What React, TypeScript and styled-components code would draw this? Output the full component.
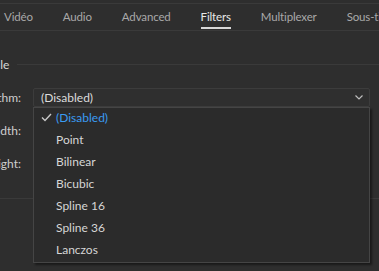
import styled, { createGlobalStyle } from 'styled-components';

const GlobalStyle = createGlobalStyle`
  html, body {
    margin: 0;
    padding: 0;
    background: #2e2e2e;
    overflow: hidden;
  }
  * {
    box-sizing: border-box;
  }
`;

const Page = styled.div`
  width: 379px;
  height: 271px;
  overflow: hidden;
  background: #2e2e2e;
  padding-top: 3px;
  font-family: 'Lato', 'Noto Sans', sans-serif;
  font-size: 12px;
  color: #d6d6d6;
`;

const TabBar = styled.div`
  display: flex;
  height: 28px;
  border-top: 1px solid #3a3a3a;
  border-bottom: 1px solid #3a3a3a;
  margin-left: -11px;
  white-space: nowrap;
  font-size: 11.5px;
  letter-spacing: -0.15px;
`;

const Tab = styled.div<{ $active?: boolean }>`
  position: relative;
  display: flex;
  align-items: center;
  padding: 0 15px 2px;
  color: ${(p) => (p.$active ? '#e8e8e8' : '#a9a9a9')};

  &::after {
    content: '';
    display: ${(p) => (p.$active ? 'block' : 'none')};
    position: absolute;
    left: 15px;
    right: 15px;
    bottom: 1px;
    height: 2px;
    background: #d8d8d8;
  }
`;

const Section = styled.div`
  padding-top: 25px;
`;

const SectionHeader = styled.div`
  display: flex;
  align-items: center;
  gap: 8px;
  margin-left: -18px;
  height: 16px;
  color: #d6d6d6;

  &::after {
    content: '';
    flex: 1;
    height: 1px;
    background: #3a3a3a;
  }
`;

const Form = styled.div`
  display: grid;
  grid-template-columns: 80px 337px;
  grid-auto-rows: 20px;
  column-gap: 12px;
  row-gap: 13px;
  margin-left: -59px;
  margin-top: 15px;
  align-items: center;
`;

const Label = styled.div`
  text-align: right;
  white-space: nowrap;
  color: #cfcfcf;
`;

const ComboWrap = styled.div`
  position: relative;
  height: 19px;
`;

const Combo = styled.div`
  display: flex;
  align-items: center;
  justify-content: space-between;
  height: 19px;
  padding: 0 6px 0 7px;
  border: 1px solid #3c3c3c;
  border-radius: 2px;
  background: #2f2f2f;
  color: #dcdcdc;
`;

const Menu = styled.div`
  position: absolute;
  top: 19px;
  left: 0;
  right: 0;
  z-index: 2;
  border: 1px solid #454545;
  background: #2b2b2b;
  box-shadow: 2px 2px 2px rgba(0, 0, 0, 0.45);
`;

const MenuItem = styled.div<{ $selected?: boolean }>`
  display: flex;
  align-items: center;
  height: 22px;
  padding-bottom: 2px;
  color: ${(p) => (p.$selected ? '#3a9bf2' : '#d6d6d6')};
`;

const CheckSlot = styled.div`
  width: 22px;
  display: flex;
  justify-content: center;
  padding-left: 3px;
`;

const Field = styled.div`
  height: 20px;
  border: 1px solid #3c3c3c;
  background: #2b2b2b;
`;

const Divider = styled.div`
  height: 1px;
  background: #3a3a3a;
  margin-top: 25px;
`;

const items = ['(Disabled)', 'Point', 'Bilinear', 'Bicubic', 'Spline 16', 'Spline 36', 'Lanczos'];

const Chevron = () => (
  <svg width="8" height="5" viewBox="0 0 8 5">
    <path d="M0.5 0.5 L4 4 L7.5 0.5" fill="none" stroke="#bdbdbd" strokeWidth="1.2" />
  </svg>
);

const Check = () => (
  <svg width="11" height="9" viewBox="0 0 11 9">
    <path d="M1 4.5 L4 7.5 L10 1" fill="none" stroke="#c8c8c8" strokeWidth="1.4" />
  </svg>
);

export default function App() {
  return (
    <>
      <GlobalStyle />
      <Page>
        <TabBar>
          <Tab>Vidéo</Tab>
          <Tab>Audio</Tab>
          <Tab>Advanced</Tab>
          <Tab $active>Filters</Tab>
          <Tab>Multiplexer</Tab>
          <Tab>Sous-titres</Tab>
        </TabBar>
        <Section>
          <SectionHeader>Scale</SectionHeader>
          <Form>
            <Label>Algorithm:</Label>
            <ComboWrap>
              <Combo>
                <span>(Disabled)</span>
                <Chevron />
              </Combo>
              <Menu>
                {items.map((it, i) => (
                  <MenuItem key={it} $selected={i === 0}>
                    <CheckSlot>{i === 0 && <Check />}</CheckSlot>
                    {it}
                  </MenuItem>
                ))}
              </Menu>
            </ComboWrap>
            <Label>Width:</Label>
            <Field />
            <Label>Height:</Label>
            <Field />
          </Form>
          <Divider />
        </Section>
      </Page>
    </>
  );
}
